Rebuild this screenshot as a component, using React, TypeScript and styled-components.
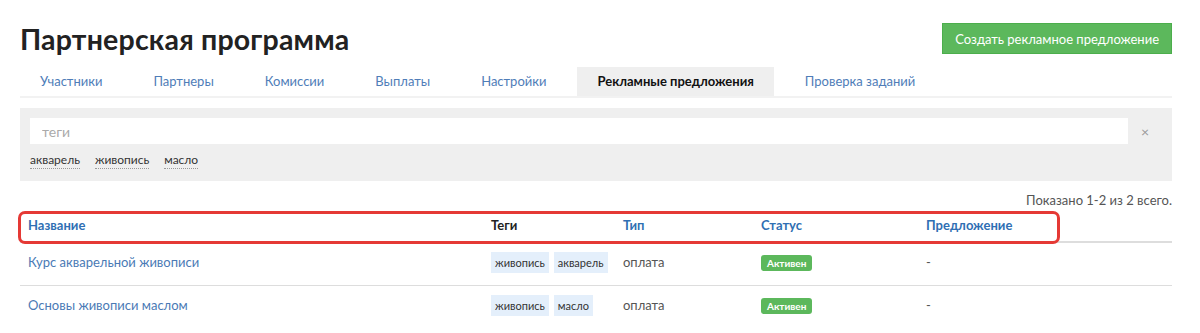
import styled, { createGlobalStyle } from 'styled-components';

const GlobalStyle = createGlobalStyle`
  body {
    margin: 0;
    background: #fff;
    font-family: Lato, "Open Sans", Arial, sans-serif;
    color: #333;
  }
`;

const Page = styled.div`
  width: 1200px;
  box-sizing: border-box;
  padding: 23px 28px 0 20px;
`;

const Header = styled.div`
  display: flex;
  align-items: center;
  justify-content: space-between;
  height: 31px;
`;

const Title = styled.h1`
  margin: 0;
  font-size: 28.5px;
  font-weight: 700;
  color: #222;
  letter-spacing: 0.2px;
`;

const CreateButton = styled.button`
  height: 31px;
  padding: 0 12px;
  border: 1px solid #4cae4c;
  background: #5cb85c;
  color: #fff;
  font-family: inherit;
  font-size: 13px;
  cursor: pointer;
`;

const Tabs = styled.div`
  display: flex;
  margin-top: 13px;
  border-bottom: 2px solid #f2f2f2;
`;

const Tab = styled.div<{ $active?: boolean }>`
  height: 29px;
  line-height: 29px;
  padding: 0 20px;
  margin-right: 11px;
  font-size: 13px;
  color: ${(p) => (p.$active ? '#111' : '#4f7db8')};
  font-weight: ${(p) => (p.$active ? 700 : 400)};
  background: ${(p) => (p.$active ? '#efefef' : 'transparent')};
`;

const FilterPanel = styled.div`
  margin-top: 10px;
  background: #efefef;
  padding: 10px 10px 12px;
  height: 73px;
  box-sizing: border-box;
`;

const SearchRow = styled.div`
  display: flex;
  align-items: center;
`;

const SearchInput = styled.input`
  flex: 1;
  height: 26px;
  border: none;
  outline: none;
  padding: 0 12px;
  font-family: inherit;
  font-size: 14px;
  color: #333;
  &::placeholder {
    color: #aaa;
  }
`;

const Clear = styled.span`
  width: 34px;
  text-align: center;
  color: #999;
  font-size: 14px;
`;

const TagLinks = styled.div`
  display: flex;
  gap: 15px;
  margin-top: 8px;
`;

const TagLink = styled.span`
  font-size: 12px;
  color: #333;
  border-bottom: 1px dotted #999;
  padding-bottom: 1px;
`;

const Summary = styled.div`
  text-align: right;
  font-size: 13px;
  color: #555;
  margin-top: 11px;
`;

const TableWrap = styled.div`
  position: relative;
  margin-top: 1px;
`;

const Highlight = styled.div`
  position: absolute;
  left: -2px;
  top: 2px;
  width: 1042px;
  height: 33px;
  box-sizing: border-box;
  border: 3px solid #e53935;
  border-radius: 7px;
  pointer-events: none;
`;

const Table = styled.table`
  width: 100%;
  border-collapse: collapse;
  table-layout: fixed;
`;

const Th = styled.th<{ $plain?: boolean }>`
  text-align: left;
  height: 32px;
  padding: 0 8px;
  font-size: 13px;
  font-weight: 700;
  color: ${(p) => (p.$plain ? '#222' : '#2f6fb3')};
  border-bottom: 2px solid #ddd;
`;

const Td = styled.td`
  height: 38px;
  padding: 0 8px 4px;
  font-size: 13px;
  color: #555;
  vertical-align: middle;
`;

const Row = styled.tr`
  & + & td {
    border-top: 1px solid #ddd;
  }
`;

const NameLink = styled.a`
  color: #4a7ab5;
  text-decoration: none;
`;

const Chips = styled.div`
  display: flex;
  gap: 5px;
`;

const Chip = styled.span`
  background: #e4effb;
  padding: 0 4px;
  height: 21px;
  line-height: 21px;
  font-size: 11px;
  color: #333;
`;

const Badge = styled.span`
  display: inline-block;
  background: #5cb85c;
  color: #fff;
  font-size: 10px;
  font-weight: 700;
  padding: 0 6px;
  height: 16px;
  line-height: 16px;
  border-radius: 3px;
`;

const tabs = [
  'Участники',
  'Партнеры',
  'Комиссии',
  'Выплаты',
  'Настройки',
  'Рекламные предложения',
  'Проверка заданий',
];

const rows = [
  { name: 'Курс акварельной живописи', tags: ['живопись', 'акварель'] },
  { name: 'Основы живописи маслом', tags: ['живопись', 'масло'] },
];

export default function App() {
  return (
    <>
      <GlobalStyle />
      <Page>
        <Header>
          <Title>Партнерская программа</Title>
          <CreateButton>Создать рекламное предложение</CreateButton>
        </Header>

        <Tabs>
          {tabs.map((t) => (
            <Tab key={t} $active={t === 'Рекламные предложения'}>
              {t}
            </Tab>
          ))}
        </Tabs>

        <FilterPanel>
          <SearchRow>
            <SearchInput placeholder="теги" />
            <Clear>×</Clear>
          </SearchRow>
          <TagLinks>
            <TagLink>акварель</TagLink>
            <TagLink>живопись</TagLink>
            <TagLink>масло</TagLink>
          </TagLinks>
        </FilterPanel>

        <Summary>Показано 1-2 из 2 всего.</Summary>

        <TableWrap>
          <Table>
            <colgroup>
              <col style={{ width: 463 }} />
              <col style={{ width: 132 }} />
              <col style={{ width: 138 }} />
              <col style={{ width: 165 }} />
              <col />
            </colgroup>
            <thead>
              <tr>
                <Th>Название</Th>
                <Th $plain>Теги</Th>
                <Th>Тип</Th>
                <Th>Статус</Th>
                <Th>Предложение</Th>
              </tr>
            </thead>
            <tbody>
              {rows.map((r) => (
                <Row key={r.name}>
                  <Td>
                    <NameLink href="#">{r.name}</NameLink>
                  </Td>
                  <Td>
                    <Chips>
                      {r.tags.map((t) => (
                        <Chip key={t}>{t}</Chip>
                      ))}
                    </Chips>
                  </Td>
                  <Td>оплата</Td>
                  <Td>
                    <Badge>Активен</Badge>
                  </Td>
                  <Td>-</Td>
                </Row>
              ))}
            </tbody>
          </Table>
          <Highlight />
        </TableWrap>
      </Page>
    </>
  );
}
